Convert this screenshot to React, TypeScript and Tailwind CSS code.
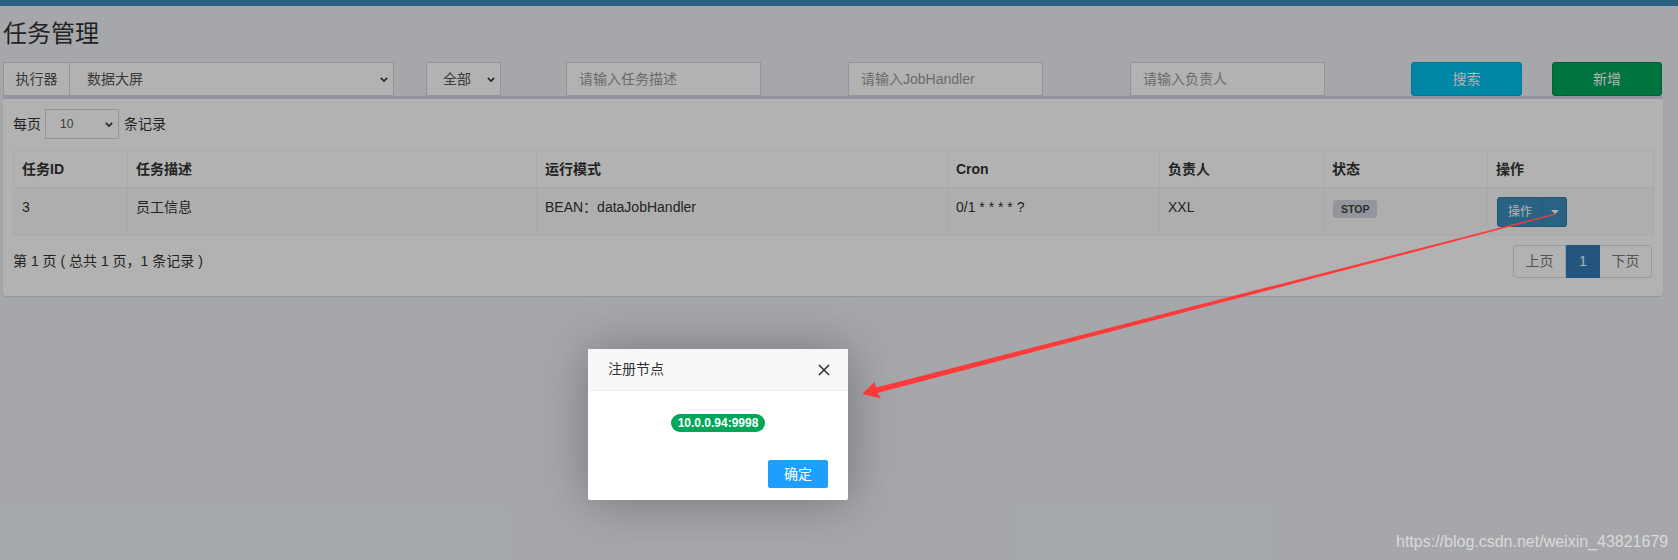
const Chevron = ({ className }: { className?: string }) => (
  <svg viewBox="0 0 10 6" className={className}>
    <path d="M1 1l4 4 4-4" fill="none" stroke="#333" strokeWidth="2" />
  </svg>
);

const cols = [114, 409, 411, 212, 164, 164, 166];
const heads = ["任务ID", "任务描述", "运行模式", "Cron", "负责人", "状态", "操作"];

const App = () => {
  return (
    <div className="relative min-h-screen overflow-hidden bg-[#ecf0f5] font-['Liberation_Sans','Noto_Sans_CJK_SC',sans-serif] text-[14px] text-[#333]">
      <div className="h-[6px] bg-[#3c8dbc]" />
      <div className="pl-[3px] pr-[15px]">
        <h1 className="mt-[15px] text-[24px] leading-[26px] text-[#333]">任务管理</h1>

        {/* filters */}
        <div className="mt-[15px] flex h-[34px] text-[#555]">
          <div className="flex w-[391px]">
            <div className="flex w-[67px] items-center justify-center border border-[#d2d6de] bg-white">执行器</div>
            <div className="flex flex-1 items-center justify-between border border-l-0 border-[#d2d6de] bg-white pl-[17px] pr-[5px]">
              <span>数据大屏</span>
              <Chevron className="w-[8px] h-[5px]" />
            </div>
          </div>
          <div className="ml-[32px] flex w-[75px] items-center justify-between border border-[#d2d6de] bg-white pl-[16px] pr-[5px]">
            <span>全部</span>
            <Chevron className="w-[8px] h-[5px]" />
          </div>
          <div className="ml-[65px] flex w-[195px] items-center border border-[#d2d6de] bg-white px-[12px] text-[#999]">请输入任务描述</div>
          <div className="ml-[87px] flex w-[195px] items-center border border-[#d2d6de] bg-white px-[12px] text-[#999]">请输入JobHandler</div>
          <div className="ml-[87px] flex w-[195px] items-center border border-[#d2d6de] bg-white px-[12px] text-[#999]">请输入负责人</div>
          <button className="ml-[86px] w-[111px] rounded-[3px] border border-[#00acd6] bg-[#00c0ef] text-white">搜索</button>
          <button className="ml-[30px] w-[110px] rounded-[3px] border border-[#008d4c] bg-[#00a65a] text-white">新增</button>
        </div>

        {/* box */}
        <div className="rounded-[3px] border-t-[3px] border-[#d2d6de] bg-white px-[10px] pt-[10px] pb-[18px] shadow-[0_1px_1px_rgba(0,0,0,0.1)]">
          <div className="flex h-[30px] items-center">
            <span>每页</span>
            <div className="ml-[4px] flex h-[30px] w-[74px] items-center justify-between border border-[#d2d6de] pl-[14px] pr-[5px] text-[12px] text-[#555]">
              <span>10</span>
              <Chevron className="w-[8px] h-[5px]" />
            </div>
            <span className="ml-[5px]">条记录</span>
          </div>

          <table className="mt-[11px] w-[1640px] table-fixed border-collapse border border-[#f4f4f4]">
            <colgroup>
              {cols.map((w, i) => (
                <col key={i} style={{ width: w }} />
              ))}
            </colgroup>
            <thead>
              <tr>
                {heads.map((h) => (
                  <th key={h} className="border border-b-2 border-[#f4f4f4] px-[8px] py-[8px] text-left font-bold leading-[20px]">
                    {h}
                  </th>
                ))}
              </tr>
            </thead>
            <tbody>
              <tr className="bg-[#f9f9f9] align-top">
                <td className="border border-[#f4f4f4] p-[8px] leading-[20px]">3</td>
                <td className="border border-[#f4f4f4] p-[8px] leading-[20px]">员工信息</td>
                <td className="border border-[#f4f4f4] p-[8px] leading-[20px]">BEAN：dataJobHandler</td>
                <td className="border border-[#f4f4f4] p-[8px] leading-[20px]">0/1 * * * * ?</td>
                <td className="border border-[#f4f4f4] p-[8px] leading-[20px]">XXL</td>
                <td className="border border-[#f4f4f4] p-[8px] leading-[20px]">
                  <span className="mt-[3px] ml-[1px] inline-flex h-[18px] items-center rounded-[3px] bg-[#d2d6de] px-[8px] text-[10.5px] font-bold text-[#444]">STOP</span>
                </td>
                <td className="border border-[#f4f4f4] p-[8px] leading-[20px]">
                  <div className="ml-[1px] flex h-[30px] w-[70px]">
                    <div className="flex w-[46px] items-center justify-center rounded-l-[3px] border border-[#367fa9] bg-[#3c8dbc] text-[12px] text-white">操作</div>
                    <div className="flex w-[24px] items-center justify-center rounded-r-[3px] border border-l-0 border-[#367fa9] bg-[#3c8dbc]">
                      <span className="h-0 w-0 border-x-[4px] border-t-[4px] border-x-transparent border-t-white" />
                    </div>
                  </div>
                </td>
              </tr>
            </tbody>
          </table>

          <div className="mt-[9px] flex items-center justify-between">
            <span>第 1 页 ( 总共 1 页，1 条记录 )</span>
            <div className="mr-[1px] flex h-[33px]">
              <div className="flex w-[53px] items-center justify-center rounded-l-[4px] border border-[#ddd] bg-white text-[#777]">上页</div>
              <div className="flex w-[34px] items-center justify-center border border-[#337ab7] bg-[#337ab7] text-white">1</div>
              <div className="flex w-[52px] items-center justify-center rounded-r-[4px] border border-l-0 border-[#ddd] bg-white text-[#777]">下页</div>
            </div>
          </div>
        </div>
      </div>

      {/* shade */}
      <div className="absolute inset-0 bg-black/30" />

      {/* layer */}
      <div className="absolute left-[588px] top-[349px] w-[260px] rounded-[2px] bg-white shadow-[1px_1px_50px_rgba(0,0,0,0.3)]">
        <div className="flex h-[42px] items-center justify-between border-b border-[#eee] bg-[#f8f8f8] pl-[20px] pr-[18px] text-[14px] text-[#333]">
          <span>注册节点</span>
          <svg viewBox="0 0 12 12" className="h-[12px] w-[12px]">
            <path d="M1 1l10 10M11 1L1 11" stroke="#333" strokeWidth="1.6" />
          </svg>
        </div>
        <div className="flex h-[64px] items-center justify-center">
          <span className="inline-flex h-[18px] items-center rounded-full bg-[#00a65a] px-[7px] text-[12px] font-bold text-white">10.0.0.94:9998</span>
        </div>
        <div className="flex justify-end pt-[5px] pr-[20px] pb-[12px]">
          <button className="h-[28px] rounded-[2px] border border-[#1e9fff] bg-[#1e9fff] px-[15px] text-[14px] leading-[26px] text-white">确定</button>
        </div>
      </div>

      {/* annotation arrow */}
      <svg className="pointer-events-none absolute inset-0 h-[560px] w-[1678px]" viewBox="0 0 1678 560">
        <polygon
          points="862,394 881,398.5 877.5,393 1556.2,214.6 1555.8,213.4 876,387.6 874.5,382"
          fill="#ff3a3a"
        />
      </svg>

      <div className="absolute left-[1396px] top-[532px] text-[16px] leading-[20px] text-[#dadada]">
        https://blog.csdn.net/weixin_43821679
      </div>
    </div>
  );
};

export default App;
